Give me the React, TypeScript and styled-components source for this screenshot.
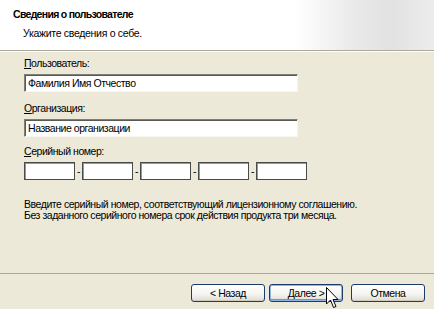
import React from "react";
import styled, { createGlobalStyle } from "styled-components";

const Global = createGlobalStyle`
  html, body { margin: 0; padding: 0; background: #ece9d8; }
  body {
    font-family: "Liberation Sans", Arial, sans-serif;
    font-size: 10.5px;
    letter-spacing: -0.45px;
    color: #000;
  }
`;

const Window = styled.div`
  position: relative;
  width: 434px;
  height: 309px;
  display: flex;
  flex-direction: column;
  background: #ece9d8;
  overflow: hidden;
`;

const Header = styled.div`
  height: 50px;
  box-sizing: border-box;
  padding: 8px 0 0 13px;
  background: linear-gradient(90deg, #ffffff 0%, #ffffff 68%, #e9e9e9 82%, #e2e2e2 90%, #ececec 100%);
  display: flex;
  flex-direction: column;
`;

const Title = styled.div`
  font-weight: bold;
  line-height: 13px;
  letter-spacing: -0.7px;
`;

const Subtitle = styled.div`
  margin: 6px 0 0 10px;
  line-height: 13px;
  letter-spacing: -0.3px;
`;

const Rule = styled.div`
  height: 0;
  border-top: 1px solid #aca899;
  border-bottom: 1px solid #ffffff;
`;

const Body = styled.div`
  flex: 1;
  padding: 5px 0 0 24px;
  display: flex;
  flex-direction: column;
`;

const Label = styled.div<{ $gap?: number }>`
  line-height: 13px;
  margin-top: ${(p) => p.$gap ?? 0}px;
`;

const Key = styled.span`
  text-decoration: underline;
`;

const TextBox = styled.div`
  margin-top: 4px;
  width: 274px;
  height: 18px;
  box-sizing: border-box;
  background: #fff;
  border-top: 1px solid #7f7d74;
  border-left: 1px solid #7f7d74;
  border-right: 1px solid #f6f5f0;
  border-bottom: 1px solid #f6f5f0;
  box-shadow: inset 1px 1px 0 #5a5a55;
  padding: 0 0 0 3px;
  line-height: 16px;
`;

const SerialRow = styled.div`
  margin-top: 4px;
  display: flex;
  align-items: center;
`;

const SerialBox = styled.div`
  width: 51px;
  height: 18px;
  box-sizing: border-box;
  background: #fff;
  border: 1px solid #4a4a46;
  box-shadow: inset 1px 1px 0 #9a9890;
`;

const Dash = styled.span`
  width: 7px;
  text-align: center;
  line-height: 13px;
`;

const Note = styled.div`
  margin-top: 19px;
  line-height: 11px;
`;

const Footer = styled.div`
  height: 36px;
  box-sizing: border-box;
  border-top: 1px solid #aca899;
  display: flex;
  justify-content: flex-end;
  align-items: flex-start;
  gap: 4px;
  padding: 10px 9px 0 0;
`;

const Button = styled.div<{ $default?: boolean; $gapLeft?: number }>`
  width: 74px;
  height: 18px;
  box-sizing: border-box;
  margin-left: ${(p) => p.$gapLeft ?? 0}px;
  border: 1px solid #1d3c6e;
  border-radius: 3px;
  background: linear-gradient(180deg, #ffffff 0%, #f4f4f0 60%, #dcdad0 100%);
  box-shadow: ${(p) =>
    p.$default ? "inset 0 0 0 1px #8eb4ea, inset 0 -1px 0 1px #6a97d8" : "inset 0 -1px 0 #cfcbbd"};
  display: flex;
  align-items: center;
  justify-content: center;
  line-height: 13px;
`;

const Cursor = styled.svg`
  position: absolute;
  left: 326px;
  top: 287px;
`;

export default function App() {
  return (
    <Window>
      <Global />
      <Header>
        <Title>Сведения о пользователе</Title>
        <Subtitle>Укажите сведения о себе.</Subtitle>
      </Header>
      <Rule />
      <Body>
        <Label>
          <Key>П</Key>ользователь:
        </Label>
        <TextBox>Фамилия Имя Отчество</TextBox>
        <Label $gap={10}>
          <Key>О</Key>рганизация:
        </Label>
        <TextBox>Название организации</TextBox>
        <Label $gap={8}>
          <Key>С</Key>ерийный номер:
        </Label>
        <SerialRow>
          <SerialBox />
          <Dash>-</Dash>
          <SerialBox />
          <Dash>-</Dash>
          <SerialBox />
          <Dash>-</Dash>
          <SerialBox />
          <Dash>-</Dash>
          <SerialBox />
        </SerialRow>
        <Note>
          Введите серийный номер, соответствующий лицензионному соглашению.
          <br />
          Без заданного серийного номера срок действия продукта три месяца.
        </Note>
      </Body>
      <Footer>
        <Button>&lt; Назад</Button>
        <Button $default>Далее &gt;</Button>
        <Button $gapLeft={4}>Отмена</Button>
      </Footer>
      <Cursor width="13" height="22" viewBox="0 0 13 22">
        <path
          d="M0.5 0.5 L0.5 17 L4.5 13 L7.5 20.5 L10 19.5 L7 12.5 L12 12.5 Z"
          fill="#fff"
          stroke="#000"
          strokeWidth="1"
          strokeLinejoin="miter"
        />
      </Cursor>
    </Window>
  );
}
